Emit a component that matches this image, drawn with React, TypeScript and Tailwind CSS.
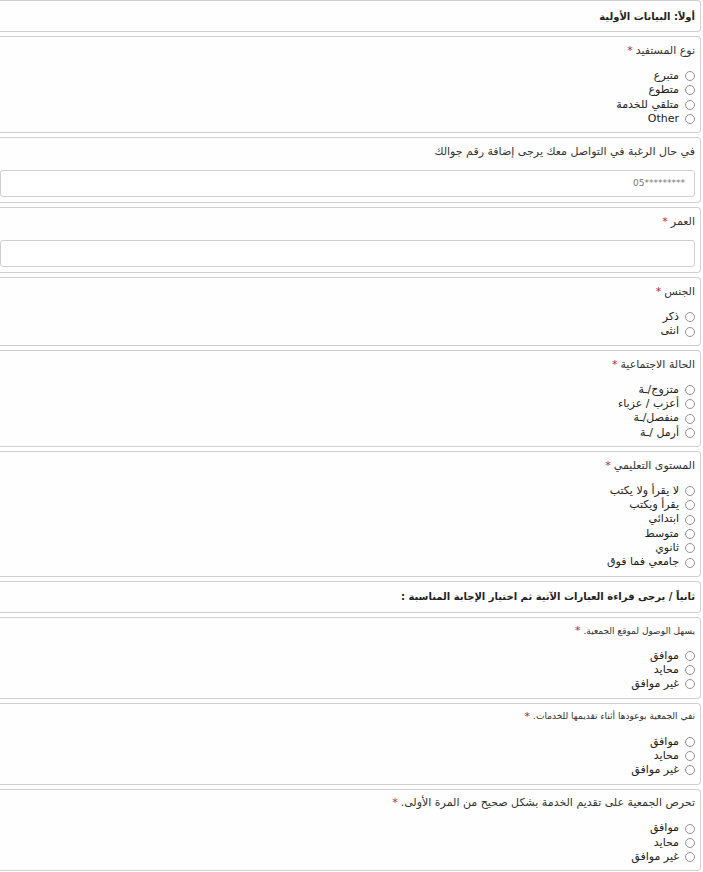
type Question = {
  label: string;
  required?: boolean;
  small?: boolean;
  options?: string[];
  input?: string;
};

const agree = ['موافق', 'محايد', 'غير موافق'];

const partOne: Question[] = [
  { label: 'نوع المستفيد', required: true, options: ['متبرع', 'متطوع', 'متلقي للخدمة', 'Other'] },
  { label: 'في حال الرغبة في التواصل معك يرجى إضافة رقم جوالك', input: '05*********' },
  { label: 'العمر', required: true, input: '' },
  { label: 'الجنس', required: true, options: ['ذكر', 'انثى'] },
  { label: 'الحالة الاجتماعية', required: true, options: ['متزوج/ـة', 'أعزب / عزباء', 'منفصل/ـة', 'أرمل /ـة'] },
  {
    label: 'المستوى التعليمي',
    required: true,
    options: ['لا يقرأ ولا يكتب', 'يقرأ ويكتب', 'ابتدائي', 'متوسط', 'ثانوي', 'جامعي فما فوق'],
  },
];

const partTwo: Question[] = [
  { label: 'يسهل الوصول لموقع الجمعية.', required: true, small: true, options: agree },
  { label: 'تفي الجمعية بوعودها أثناء تقديمها للخدمات.', required: true, small: true, options: agree },
  { label: 'تحرص الجمعية على تقديم الخدمة بشكل صحيح من المرة الأولى.', required: true, options: agree },
];

function Card({ children }: { children: React.ReactNode }) {
  return (
    <div className="mb-1 rounded-r-[4px] border border-l-0 border-[#cfcfcf] bg-[#fefefe] pr-[5px]">
      {children}
    </div>
  );
}

function SectionTitle({ text }: { text: string }) {
  return (
    <Card>
      <div className="flex h-[30px] items-center text-[10px] font-bold text-[#222]">{text}</div>
    </Card>
  );
}

function QuestionCard({ q }: { q: Question }) {
  return (
    <Card>
      <div className="pt-[7px] pb-[6px]">
        <div
          className={`flex items-center gap-[3px] text-[#333] ${q.small ? 'h-[13px] text-[9px]' : 'h-[14px] text-[11px]'}`}
        >
          <span>{q.label}</span>
          {q.required && <span className="text-[11px] text-[#b3263a]">*</span>}
        </div>
        {q.options && (
          <div className="mt-[11px] flex flex-col">
            {q.options.map((o) => (
              <label key={o} className="flex h-[14.3px] items-center gap-[5px] text-[11px] text-[#222]">
                <span className="ml-[1px] inline-block h-[10px] w-[10px] rounded-full border border-[#939393] bg-white" />
                <span>{o}</span>
              </label>
            ))}
          </div>
        )}
        {q.input !== undefined && (
          <div className="mt-[11px] mb-[-1px] flex h-[27px] items-center rounded-[3px] border border-[#cfcfcf] bg-white pr-[9px] text-[9px] text-[#777]">
            <span dir="ltr">{q.input}</span>
          </div>
        )}
      </div>
    </Card>
  );
}

export default function App() {
  return (
    <div dir="rtl" className="mr-[2px] bg-white font-['DejaVu_Sans',Tahoma,sans-serif]">
      <SectionTitle text="أولاً: البيانات الأولية" />
      {partOne.map((q) => (
        <QuestionCard key={q.label} q={q} />
      ))}
      <SectionTitle text="ثانياً / يرجى قراءة العبارات الآتية ثم اختيار الإجابة المناسبة :" />
      {partTwo.map((q) => (
        <QuestionCard key={q.label} q={q} />
      ))}
    </div>
  );
}
